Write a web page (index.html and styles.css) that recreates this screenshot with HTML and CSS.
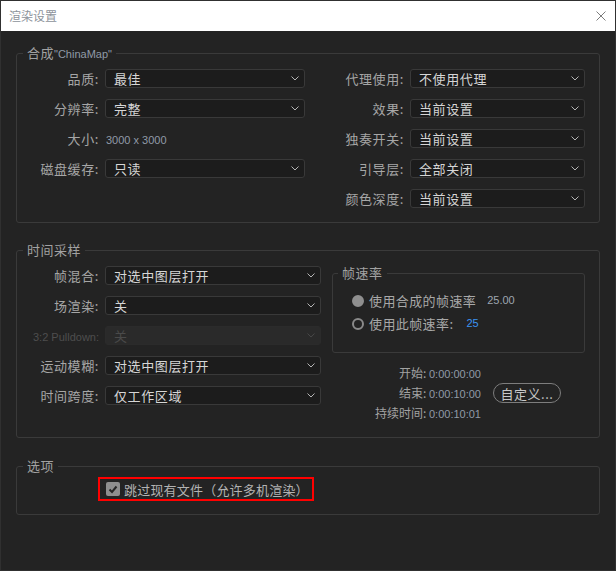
FILE: index.html
```html
<!DOCTYPE html>
<html lang="zh-CN">
<head>
<meta charset="utf-8">
<title>渲染设置</title>
<link rel="stylesheet" href="styles.css">
</head>
<body>
<div class="dialog">
  <header class="titlebar">
    <span class="title">渲染设置</span>
    <svg class="close" width="10" height="10" viewBox="0 0 10 10"><path d="M0.5 0.5L9.5 9.5M9.5 0.5L0.5 9.5" stroke="#7c7c7c" stroke-width="1" fill="none"/></svg>
  </header>
  <main class="content">
    <fieldset class="group g1">
      <legend>合成<span class="lat">"ChinaMap"</span></legend>
      <div class="g1-body">
        <span class="lbl">品质:</span>
        <div class="sel"><span>最佳</span><svg class="chev" width="8" height="5" viewBox="0 0 8 5"><path d="M0.5 0.5L4 4L7.5 0.5" fill="none" stroke="#b4b4b4"/></svg></div>
        <span class="lbl">代理使用:</span>
        <div class="sel"><span>不使用代理</span><svg class="chev" width="8" height="5" viewBox="0 0 8 5"><path d="M0.5 0.5L4 4L7.5 0.5" fill="none" stroke="#b4b4b4"/></svg></div>

        <span class="lbl">分辨率:</span>
        <div class="sel"><span>完整</span><svg class="chev" width="8" height="5" viewBox="0 0 8 5"><path d="M0.5 0.5L4 4L7.5 0.5" fill="none" stroke="#b4b4b4"/></svg></div>
        <span class="lbl">效果:</span>
        <div class="sel"><span>当前设置</span><svg class="chev" width="8" height="5" viewBox="0 0 8 5"><path d="M0.5 0.5L4 4L7.5 0.5" fill="none" stroke="#b4b4b4"/></svg></div>

        <span class="lbl">大小:</span>
        <span class="val"><span class="lat">3000 x 3000</span></span>
        <span class="lbl">独奏开关:</span>
        <div class="sel"><span>当前设置</span><svg class="chev" width="8" height="5" viewBox="0 0 8 5"><path d="M0.5 0.5L4 4L7.5 0.5" fill="none" stroke="#b4b4b4"/></svg></div>

        <span class="lbl">磁盘缓存:</span>
        <div class="sel"><span>只读</span><svg class="chev" width="8" height="5" viewBox="0 0 8 5"><path d="M0.5 0.5L4 4L7.5 0.5" fill="none" stroke="#b4b4b4"/></svg></div>
        <span class="lbl">引导层:</span>
        <div class="sel"><span>全部关闭</span><svg class="chev" width="8" height="5" viewBox="0 0 8 5"><path d="M0.5 0.5L4 4L7.5 0.5" fill="none" stroke="#b4b4b4"/></svg></div>

        <span class="lbl col3">颜色深度:</span>
        <div class="sel"><span>当前设置</span><svg class="chev" width="8" height="5" viewBox="0 0 8 5"><path d="M0.5 0.5L4 4L7.5 0.5" fill="none" stroke="#b4b4b4"/></svg></div>
      </div>
    </fieldset>

    <fieldset class="group g2">
      <legend>时间采样</legend>
      <div class="g2-body">
        <div class="g2-left">
          <span class="lbl">帧混合:</span>
          <div class="sel"><span>对选中图层打开</span><svg class="chev" width="8" height="5" viewBox="0 0 8 5"><path d="M0.5 0.5L4 4L7.5 0.5" fill="none" stroke="#b4b4b4"/></svg></div>
          <span class="lbl">场渲染:</span>
          <div class="sel"><span>关</span><svg class="chev" width="8" height="5" viewBox="0 0 8 5"><path d="M0.5 0.5L4 4L7.5 0.5" fill="none" stroke="#b4b4b4"/></svg></div>
          <span class="lbl disabled"><span class="lat">3:2 Pulldown:</span></span>
          <div class="sel is-disabled"><span>关</span><svg class="chev" width="8" height="5" viewBox="0 0 8 5"><path d="M0.5 0.5L4 4L7.5 0.5" fill="none" stroke="#474747"/></svg></div>
          <span class="lbl">运动模糊:</span>
          <div class="sel"><span>对选中图层打开</span><svg class="chev" width="8" height="5" viewBox="0 0 8 5"><path d="M0.5 0.5L4 4L7.5 0.5" fill="none" stroke="#b4b4b4"/></svg></div>
          <span class="lbl">时间跨度:</span>
          <div class="sel"><span>仅工作区域</span><svg class="chev" width="8" height="5" viewBox="0 0 8 5"><path d="M0.5 0.5L4 4L7.5 0.5" fill="none" stroke="#b4b4b4"/></svg></div>
        </div>
        <div class="g2-right">
          <fieldset class="group rate">
            <legend>帧速率</legend>
            <div class="rate-body">
              <div class="radio-row"><span class="radio on"></span><span class="rtext">使用合成的帧速率</span><span class="lat num">25.00</span></div>
              <div class="radio-row"><span class="radio"></span><span class="rtext">使用此帧速率:</span><span class="lat blue">25</span></div>
            </div>
          </fieldset>
          <div class="timing">
            <div class="times">
              <div class="trow">开始: <span class="lat">0:00:00:00</span></div>
              <div class="trow">结束: <span class="lat">0:00:10:00</span></div>
              <div class="trow">持续时间: <span class="lat">0:00:10:01</span></div>
            </div>
            <div class="btn">自定义...</div>
          </div>
        </div>
      </div>
    </fieldset>

    <fieldset class="group g3">
      <legend>选项</legend>
      <div class="g3-body">
        <div class="mark">
          <span class="check"><svg width="14" height="14" viewBox="0 0 14 14"><path d="M3.5 7.5L6 10L10.5 4.5" fill="none" stroke="#262626" stroke-width="2"/></svg></span>
          <span class="ctext">跳过现有文件（允许多机渲染）</span>
        </div>
      </div>
    </fieldset>
  </main>
</div>
</body>
</html>
```
FILE: styles.css
```css
* { box-sizing: border-box; }
html, body { margin: 0; padding: 0; }
body {
  background: #232323;
  font-family: "Noto Sans CJK SC", sans-serif;
  font-size: 13px;
  color: #a4a4a4;
}
.dialog {
  width: 616px;
  height: 571px;
  border: 1px solid #303030;
  background: #232323;
  display: flex;
  flex-direction: column;
}
.titlebar {
  height: 30px;
  flex: none;
  background: #ffffff;
  display: flex;
  align-items: center;
  justify-content: space-between;
  padding: 0 9px 0 8px;
}
.title {
  font-size: 12px;
  line-height: 16px;
  color: #8d939b;
}
.close { display: block; }
.content { padding: 13px 15px 0; }

.group {
  margin: 0;
  padding: 0;
  border: 1px solid #3a3a3a;
  border-radius: 3px;
  min-inline-size: 0;
}
.group legend {
  margin-left: 6px;
  padding: 0 4px;
  height: 18px;
  line-height: 18px;
  font-size: 13px;
  color: #a2a2a2;
  letter-spacing: 0.5px;
}
.lat {
  font-family: "Liberation Sans", sans-serif;
  font-size: 11px;
  line-height: 1;
  letter-spacing: 0;
  color: #909aa7;
}

.lbl {
  text-align: right;
  line-height: 19px;
  height: 19px;
  white-space: nowrap;
  letter-spacing: 0.6px;
  color: #a6a6a6;
}
.lbl.disabled .lat { color: #4e4e4e; }
.col3 { grid-column: 3; }
.val { line-height: 19px; height: 19px; padding-left: 1px; }

.sel {
  height: 19px;
  display: flex;
  align-items: center;
  justify-content: space-between;
  border: 1px solid #393939;
  border-radius: 3px;
  background: #1c1c1c;
  padding: 0 5px 0 8px;
  color: #d6d6d6;
  letter-spacing: 0.6px;
  line-height: 17px;
  white-space: nowrap;
}
.sel.is-disabled {
  background: #2a2a2a;
  border-color: #2b2b2b;
  color: #4a4a4a;
}
.chev { display: block; flex: none; }

.g1-body {
  display: grid;
  grid-template-columns: 82px 200px 93px 175px;
  grid-auto-rows: 19px;
  column-gap: 6px;
  row-gap: 11px;
  padding: 7px 0 14px;
}

.g2 { margin-top: 18px; }
.g2-body {
  display: flex;
  gap: 11px;
  padding: 5px 0 14px;
}
.g2-left {
  display: grid;
  grid-template-columns: 82px 216px;
  grid-auto-rows: 19px;
  column-gap: 6px;
  row-gap: 11px;
  padding-top: 2px;
  align-content: start;
}
.g2-right {
  width: 253px;
  display: flex;
  flex-direction: column;
}
.rate legend { margin-left: 5px; }
.rate-body { padding: 7px 0 17px 19px; }
.radio-row {
  height: 23px;
  display: flex;
  align-items: center;
  color: #a8a8a8;
  letter-spacing: 0.4px;
}
.radio {
  width: 12px;
  height: 12px;
  border-radius: 50%;
  border: 2px solid #8a8a8a;
  margin-right: 5px;
  flex: none;
}
.radio.on { background: #8f8f8f; border-color: #8f8f8f; }
.num { margin-left: 11px; color: #9ea6b0; }
.blue { margin-left: 13px; color: #3b93f2; }

.timing {
  margin-top: 10px;
  display: flex;
  align-items: center;
  justify-content: flex-end;
  padding-right: 24px;
}
.times {
  text-align: right;
  font-size: 12px;
  color: #a2a2a2;
}
.trow { height: 20px; line-height: 20px; }
.btn {
  margin-left: 12px;
  width: 68px;
  height: 20px;
  border: 1px solid #7d7d7d;
  border-radius: 10px;
  display: flex;
  align-items: center;
  justify-content: center;
  color: #c8c8c8;
  font-size: 13px;
  letter-spacing: 0.5px;
}

.g3 { margin-top: 19px; }
.g3-body { padding: 2px 0 13px 81px; }
.mark {
  width: 216px;
  height: 24px;
  border: 2px solid #ff0000;
  display: flex;
  align-items: center;
  padding-left: 6px;
}
.check {
  width: 14px;
  height: 14px;
  border-radius: 2px;
  background: #8e8e8e;
  margin-right: 4px;
  flex: none;
}
.check svg { display: block; }
.ctext {
  color: #b2b2b2;
  white-space: nowrap;
  letter-spacing: 0.2px;
}
```
